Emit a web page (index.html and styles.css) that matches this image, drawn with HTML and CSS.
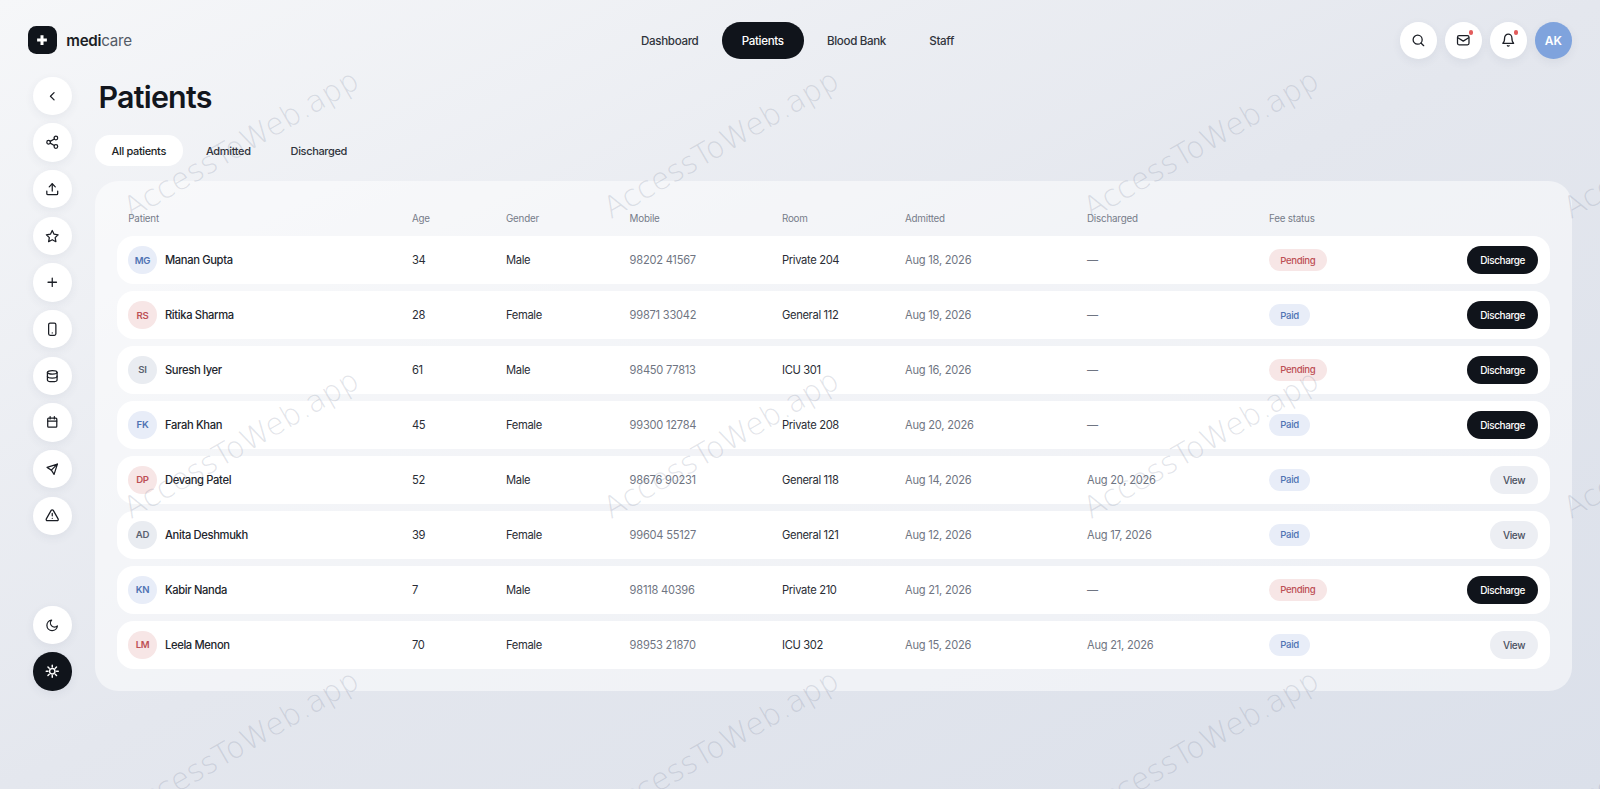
FILE: index.html
```html
<!DOCTYPE html>
<html lang="en">
<head>
<meta charset="utf-8">
<title>medicare - Patients</title>
<link rel="stylesheet" href="styles.css">
</head>
<body>
<svg class="sprite" aria-hidden="true">
  <symbol id="i-back" viewBox="0 0 24 24"><path d="m15 18-6-6 6-6"/></symbol>
  <symbol id="i-share" viewBox="0 0 24 24"><circle cx="18" cy="5" r="3"/><circle cx="6" cy="12" r="3"/><circle cx="18" cy="19" r="3"/><path d="m8.6 13.5 6.8 4M15.4 6.5l-6.8 4"/></symbol>
  <symbol id="i-upload" viewBox="0 0 24 24"><path d="M3 15v4a2 2 0 0 0 2 2h14a2 2 0 0 0 2-2v-4"/><path d="m17 8-5-5-5 5"/><path d="M12 3v12"/></symbol>
  <symbol id="i-star" viewBox="0 0 24 24"><path d="m12 2.500 3 6.100 6.700 1-4.900 4.700 1.200 6.700-6-3.200L6 21l1.200-6.700-4.900-4.700 6.700-1z"/></symbol>
  <symbol id="i-plus" viewBox="0 0 24 24"><path d="M5 12h14M12 5v14"/></symbol>
  <symbol id="i-phone" viewBox="0 0 24 24"><rect x="6" y="2" width="12" height="20" rx="2.500"/><path d="M12 18h.01"/></symbol>
  <symbol id="i-db" viewBox="0 0 24 24"><ellipse cx="12" cy="5.500" rx="8" ry="3"/><path d="M4 5.500V18c0 1.700 3.600 3 8 3s8-1.300 8-3V5.500"/><path d="M4 12c0 1.700 3.600 3 8 3s8-1.300 8-3"/></symbol>
  <symbol id="i-cal" viewBox="0 0 24 24"><rect x="4.500" y="5" width="15" height="15" rx="1.500"/><path d="M8.500 2.500v4M15.500 2.500v4M4.500 10h15"/></symbol>
  <symbol id="i-send" viewBox="0 0 24 24"><path d="M20.500 3.500 3.500 9l7 4.500L15 20.500z"/><path d="M20.500 3.500 10.500 13.500"/></symbol>
  <symbol id="i-alert" viewBox="0 0 24 24"><path d="m21.700 18-8-14a2 2 0 0 0-3.500 0l-8 14A2 2 0 0 0 4 21h16a2 2 0 0 0 1.700-3"/><path d="M12 9v4M12 17h.01"/></symbol>
  <symbol id="i-moon" viewBox="0 0 24 24"><path d="M11 3.500a6.500 6.500 0 0 0 9.500 9.500A8.700 8.700 0 1 1 11 3.500z"/></symbol>
  <symbol id="i-sun" viewBox="0 0 24 24"><circle cx="12" cy="12" r="4.500"/><path d="M12 2v3M12 19v3M4.900 4.900l2.100 2.100M17 17l2.100 2.100M2 12h3M19 12h3M4.900 19.100 7 17M17 7l2.100-2.100"/></symbol>
  <symbol id="i-search" viewBox="0 0 24 24"><circle cx="11" cy="11" r="7.500"/><path d="m21 21-4.500-4.500"/></symbol>
  <symbol id="i-mail" viewBox="0 0 24 24"><rect x="2.500" y="4.500" width="19" height="15" rx="2.500"/><path d="m3 8 9 5.500L21 8"/></symbol>
  <symbol id="i-bell" viewBox="0 0 24 24"><path d="M6 8a6 6 0 0 1 12 0c0 7 3 9 3 9H3s3-2 3-9"/><path d="M10.500 21a1.800 1.800 0 0 0 3 0"/></symbol>
</svg>

<div class="shell">
  <header class="topbar">
    <div class="brand">
      <span class="logo"><svg viewBox="0 0 24 24"><path d="M12 5.500v13M5.500 12h13"/></svg></span>
      <span class="wordmark"><b>medi</b>care</span>
    </div>
    <nav class="nav">
      <a class="nav-item">Dashboard</a>
      <a class="nav-item active">Patients</a>
      <a class="nav-item">Blood Bank</a>
      <a class="nav-item">Staff</a>
    </nav>
    <div class="actions">
      <button class="round"><svg class="ic"><use href="#i-search"/></svg></button>
      <button class="round"><svg class="ic"><use href="#i-mail"/></svg><i class="dot"></i></button>
      <button class="round"><svg class="ic"><use href="#i-bell"/></svg><i class="dot"></i></button>
      <span class="round me">AK</span>
    </div>
  </header>

  <div class="body">
    <aside class="side">
      <div class="side-group">
        <button class="round big"><svg class="ic"><use href="#i-back"/></svg></button>
        <button class="round big"><svg class="ic"><use href="#i-share"/></svg></button>
        <button class="round big"><svg class="ic"><use href="#i-upload"/></svg></button>
        <button class="round big"><svg class="ic"><use href="#i-star"/></svg></button>
        <button class="round big"><svg class="ic"><use href="#i-plus"/></svg></button>
        <button class="round big"><svg class="ic"><use href="#i-phone"/></svg></button>
        <button class="round big"><svg class="ic"><use href="#i-db"/></svg></button>
        <button class="round big"><svg class="ic"><use href="#i-cal"/></svg></button>
        <button class="round big"><svg class="ic"><use href="#i-send"/></svg></button>
        <button class="round big"><svg class="ic"><use href="#i-alert"/></svg></button>
      </div>
      <div class="side-group">
        <button class="round big"><svg class="ic"><use href="#i-moon"/></svg></button>
        <button class="round big dark"><svg class="ic"><use href="#i-sun"/></svg></button>
      </div>
    </aside>

    <main class="main">
      <h1 class="title">Patients</h1>
      <div class="tabs">
        <a class="tab active">All patients</a>
        <a class="tab">Admitted</a>
        <a class="tab">Discharged</a>
      </div>
      <section class="card">
        <div class="grid head">
          <span>Patient</span><span>Age</span><span>Gender</span><span>Mobile</span><span>Room</span><span>Admitted</span><span>Discharged</span><span>Fee status</span><span></span>
        </div>
        <div class="grid row">
          <span class="who"><i class="av blue">MG</i>Manan Gupta</span><span>34</span><span>Male</span><span class="mute">98202 41567</span><span>Private 204</span><span class="mute">Aug 18, 2026</span><span class="mute">—</span><span><em class="pill pending">Pending</em></span><button class="btn primary">Discharge</button>
        </div>
        <div class="grid row">
          <span class="who"><i class="av red">RS</i>Ritika Sharma</span><span>28</span><span>Female</span><span class="mute">99871 33042</span><span>General 112</span><span class="mute">Aug 19, 2026</span><span class="mute">—</span><span><em class="pill paid">Paid</em></span><button class="btn primary">Discharge</button>
        </div>
        <div class="grid row">
          <span class="who"><i class="av grey">SI</i>Suresh Iyer</span><span>61</span><span>Male</span><span class="mute">98450 77813</span><span>ICU 301</span><span class="mute">Aug 16, 2026</span><span class="mute">—</span><span><em class="pill pending">Pending</em></span><button class="btn primary">Discharge</button>
        </div>
        <div class="grid row">
          <span class="who"><i class="av blue">FK</i>Farah Khan</span><span>45</span><span>Female</span><span class="mute">99300 12784</span><span>Private 208</span><span class="mute">Aug 20, 2026</span><span class="mute">—</span><span><em class="pill paid">Paid</em></span><button class="btn primary">Discharge</button>
        </div>
        <div class="grid row">
          <span class="who"><i class="av red">DP</i>Devang Patel</span><span>52</span><span>Male</span><span class="mute">98676 90231</span><span>General 118</span><span class="mute">Aug 14, 2026</span><span class="mute">Aug 20, 2026</span><span><em class="pill paid">Paid</em></span><button class="btn ghost">View</button>
        </div>
        <div class="grid row">
          <span class="who"><i class="av grey">AD</i>Anita Deshmukh</span><span>39</span><span>Female</span><span class="mute">99604 55127</span><span>General 121</span><span class="mute">Aug 12, 2026</span><span class="mute">Aug 17, 2026</span><span><em class="pill paid">Paid</em></span><button class="btn ghost">View</button>
        </div>
        <div class="grid row">
          <span class="who"><i class="av blue">KN</i>Kabir Nanda</span><span>7</span><span>Male</span><span class="mute">98118 40396</span><span>Private 210</span><span class="mute">Aug 21, 2026</span><span class="mute">—</span><span><em class="pill pending">Pending</em></span><button class="btn primary">Discharge</button>
        </div>
        <div class="grid row">
          <span class="who"><i class="av red">LM</i>Leela Menon</span><span>70</span><span>Female</span><span class="mute">98953 21870</span><span>ICU 302</span><span class="mute">Aug 15, 2026</span><span class="mute">Aug 21, 2026</span><span><em class="pill paid">Paid</em></span><button class="btn ghost">View</button>
        </div>
      </section>
    </main>
  </div>
</div>

<div class="watermarks" aria-hidden="true">
  <span>AccessToWeb.app</span><span>AccessToWeb.app</span><span>AccessToWeb.app</span><span>AccessToWeb.app</span>
  <span>AccessToWeb.app</span><span>AccessToWeb.app</span><span>AccessToWeb.app</span><span>AccessToWeb.app</span>
  <span>AccessToWeb.app</span><span>AccessToWeb.app</span><span>AccessToWeb.app</span><span>AccessToWeb.app</span>
</div>
</body>
</html>
```
FILE: styles.css
```css
* { box-sizing: border-box; }
html, body { height: 100%; }
body {
  margin: 0;
  height: 789px;
  overflow: hidden;
  position: relative;
  background: linear-gradient(to bottom right, #f6f7f9 0%, #e4e7ee 50%, #dbe0ea 100%);
  font-family: Inter, "Liberation Sans", sans-serif;
  font-size: 11.6px;
  letter-spacing: -.03em;
  color: #2a2d35;
}
.sprite { position: absolute; width: 0; height: 0; }
.shell { padding: 22px 28.33px 0; }
.topbar { display: flex; align-items: center; height: 36.67px; }
.brand { flex: 1; display: flex; align-items: center; gap: 9.67px; }
.logo {
  width: 28.33px; height: 28.33px; border-radius: 8.33px; background: #10141b;
  display: flex; align-items: center; justify-content: center;
}
.logo svg { width: 18px; height: 18px; fill: none; stroke: #fff; stroke-width: 4; }
.wordmark { font-size: 15.2px; color: #555b66; letter-spacing: -.02em; }
.wordmark b { font-weight: 600; color: #1b1e25; }
.nav { display: flex; gap: 3.33px; margin-right: 5px; }
.nav-item {
  height: 36.67px; padding: .6px 20px 0; border-radius: 18.33px;
  display: flex; align-items: center; font-weight: 500; color: #30343c;
}
.nav-item.active { background: #10141b; color: #fff; }
.actions { flex: 1; display: flex; justify-content: flex-end; gap: 8.33px; }
.round {
  width: 36.67px; height: 36.67px; border: 0; border-radius: 50%; padding: 0;
  background: #fff; position: relative; flex: none;
  display: flex; align-items: center; justify-content: center;
  box-shadow: 0 3px 10px rgba(60, 70, 95, .07);
  color: #1b1e25;
}
.round.big { width: 38.33px; height: 38.33px; }
.round.dark { background: #10141b; color: #fff; }
.round.dark .ic { stroke-width: 2.4; }
.round.me { background: #7fa3dd; color: #fff; font-weight: 600; font-size: 12px; letter-spacing: 0; }
.ic { width: 14.5px; height: 14.5px; fill: none; stroke: currentColor; stroke-width: 2.1; stroke-linecap: round; stroke-linejoin: round; }
.dot { position: absolute; top: 8px; right: 8.5px; width: 4.6px; height: 4.6px; border-radius: 50%; background: #e25c5c; }
.body { display: flex; gap: 23.33px; padding: 18px 0 0 5px; }
.side { width: 38.33px; height: 614px; display: flex; flex-direction: column; justify-content: space-between; }
.side-group { display: flex; flex-direction: column; gap: 8.33px; }
.main { flex: 1; min-width: 0; }
.title { margin: 0 0 0 3.5px; font-size: 30.4px; line-height: 40px; font-weight: 600; letter-spacing: -.025em; color: #12161d; }
.tabs { display: flex; gap: 6.4px; margin-top: 18.3px; }
.tab {
  height: 30.67px; padding: .6px 17px 0 16.6px; border-radius: 15.33px;
  display: flex; align-items: center; font-size: 11px; font-weight: 500; color: #30343c;
}
.tab.active { background: #fff; color: #1b1e25; }
.card {
  margin-top: 15.33px; height: 509.67px; padding: 21.67px; border-radius: 23.33px;
  background: rgba(255, 255, 255, .5);
  display: flex; flex-direction: column; gap: 6.67px;
}
.grid {
  display: grid;
  grid-template-columns: 283.7px 94px 123.6px 152.4px 123px 182px 182px 1fr auto;
  align-items: center;
  padding: 0 11.67px;
}
.head { height: 26.67px; padding-top: 5.4px; color: #767c89; font-size: 9.8px; letter-spacing: -.02em; }
.row { height: 48.33px; background: #fff; border-radius: 16.67px; font-size: 11.2px; font-weight: 400; }
.who { display: flex; align-items: center; gap: 8.33px; font-size: 11.2px; font-weight: 500; color: #22252c; }
.av {
  width: 28.33px; height: 28.33px; border-radius: 50%; flex: none;
  display: flex; align-items: center; justify-content: center;
  font-style: normal; font-size: 9.6px; font-weight: 600;
}
.av.blue { background: #e8edf8; color: #4f73b3; }
.av.red { background: #f7e6e6; color: #bd5055; }
.av.grey { background: #e9ecf1; color: #5b6270; }
.mute { color: #6f7582; font-weight: 400; font-size: 11.1px; letter-spacing: -.02em; }
.pill {
  display: inline-flex; align-items: center; height: 22.5px; padding: 0 11.4px;
  border-radius: 11.25px; font-style: normal; font-size: 9.6px; letter-spacing: -.04em; font-weight: 500;
}
.pill.pending { background: #f7e6e6; color: #bd5055; }
.pill.paid { background: #e8edf8; color: #4f73b3; }
.btn {
  height: 28.33px; padding: 0 13.33px; border: 0; border-radius: 14.17px;
  font-family: inherit; font-size: 10px; letter-spacing: -.04em; font-weight: 500;
}
.btn.primary { background: #10141b; color: #fff; }
.btn.ghost { background: #eceef3; color: #4b5160; }
.watermarks {
  position: absolute; inset: 0; overflow: hidden; pointer-events: none;
  display: grid; grid-template-columns: repeat(4, 480px); grid-auto-rows: 300px;
}
.watermarks span {
  font-family: "DejaVu Sans", sans-serif; font-size: 30px; font-weight: 200; letter-spacing: 0; color: rgba(110, 120, 145, .2);
  white-space: nowrap; width: 270px; height: 36px; margin: 125px 0 0 108px;
  transform: rotate(-30deg);
}
```
